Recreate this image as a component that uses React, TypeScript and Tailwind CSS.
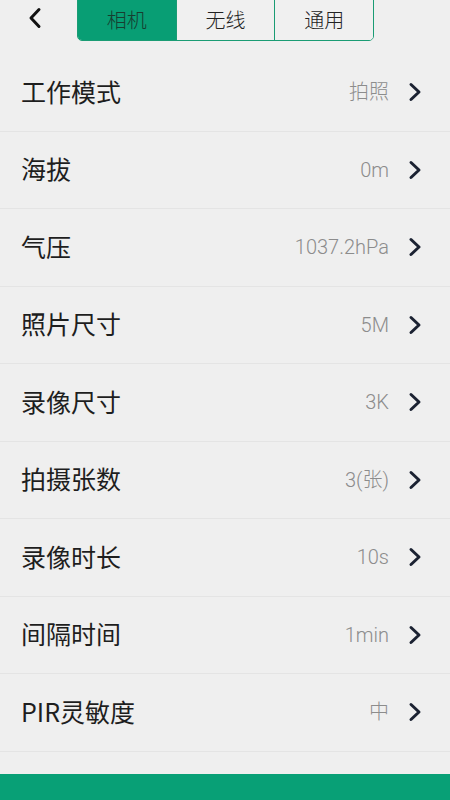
const rows: { label: string; value: string }[] = [
  { label: "工作模式", value: "拍照" },
  { label: "海拔", value: "0m" },
  { label: "气压", value: "1037.2hPa" },
  { label: "照片尺寸", value: "5M" },
  { label: "录像尺寸", value: "3K" },
  { label: "拍摄张数", value: "3(张)" },
  { label: "录像时长", value: "10s" },
  { label: "间隔时间", value: "1min" },
  { label: "PIR灵敏度", value: "中" },
];

const tabs = ["相机", "无线", "通用"];

function Chevron({ className }: { className?: string }) {
  return (
    <svg viewBox="0 0 14 20" className={className} fill="none">
      <path d="M3 2.5 L11 10 L3 17.5" stroke="currentColor" strokeWidth="3" strokeLinecap="round" strokeLinejoin="round" />
    </svg>
  );
}

export default function App() {
  return (
    <div
      className="w-[450px] h-[800px] overflow-hidden bg-[#efefef] flex flex-col"
      style={{ fontFamily: '"Noto Sans CJK SC", "Noto Sans", sans-serif' }}
    >
      <header className="h-[54px] flex items-start relative shrink-0">
        <button className="absolute left-[28px] top-[7px] w-[20px] h-[22px] text-[#111]">
          <svg viewBox="0 0 14 22" className="w-[14px] h-[22px]" fill="none">
            <path d="M11 2.5 L3 11 L11 19.5" stroke="currentColor" strokeWidth="3" strokeLinecap="round" strokeLinejoin="round" />
          </svg>
        </button>
        <div className="ml-[77px] mt-[-4px] w-[297px] h-[45px] flex border border-[#1a9c74] rounded-b-[5px] overflow-hidden">
          {tabs.map((t, i) => (
            <div
              key={t}
              className={`flex-1 flex items-center justify-center pt-[3px] text-[20px] font-light ${
                i === 0 ? "bg-[#089e74] text-[#173d30]" : "bg-[#f0f0f0] text-[#222]"
              } ${i > 0 ? "border-l border-[#1a9c74]" : ""}`}
            >
              {t}
            </div>
          ))}
        </div>
      </header>

      <div className="flex flex-col">
        {rows.map((r) => (
          <div
            key={r.label}
            className="h-[77.5px] flex items-center pl-[21px] pr-[28px] border-b border-[#e4e4e4]"
          >
            <span className="text-[25px] text-[#1e1e1e] pb-[2px]">{r.label}</span>
            <span
              className="ml-auto text-[20px] font-light text-[#8c8c8c]"
              style={{ fontFamily: 'Roboto, "Noto Sans CJK SC", sans-serif' }}
            >
              {r.value}
            </span>
            <Chevron className="ml-[19px] w-[14px] h-[20px] text-[#1b2232]" />
          </div>
        ))}
      </div>

      <div className="mt-[22px] flex-1 bg-[#08a076] flex justify-center">
        <span className="mt-[23px] text-[24px] text-[#1a1a1a] tracking-[2px]">一键同步设置到相机</span>
      </div>
    </div>
  );
}
